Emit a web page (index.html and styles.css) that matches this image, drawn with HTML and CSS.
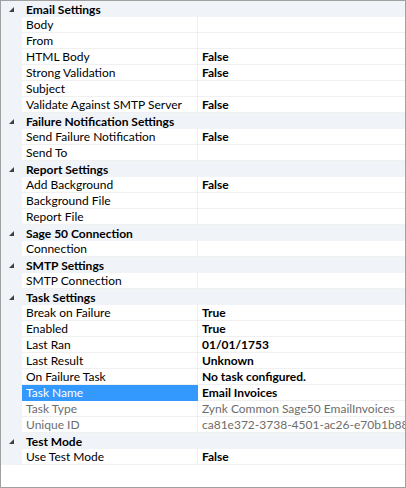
FILE: index.html
```html
<!DOCTYPE html>
<html>
<head>
<meta charset="utf-8">
<link rel="stylesheet" href="styles.css">
</head>
<body>
<div class="grid">
  <div class="cat"><span class="tog"><svg width="5" height="5" viewBox="0 0 5 5"><polygon points="5,0 5,5 0,5"/></svg></span><span class="cat-label">Email Settings</span></div>
  <div class="prop"><span class="gut"></span><span class="name">Body</span><span class="val"></span></div>
  <div class="prop"><span class="gut"></span><span class="name">From</span><span class="val"></span></div>
  <div class="prop"><span class="gut"></span><span class="name">HTML Body</span><span class="val">False</span></div>
  <div class="prop"><span class="gut"></span><span class="name">Strong Validation</span><span class="val">False</span></div>
  <div class="prop"><span class="gut"></span><span class="name">Subject</span><span class="val"></span></div>
  <div class="prop"><span class="gut"></span><span class="name">Validate Against SMTP Server</span><span class="val">False</span></div>

  <div class="cat"><span class="tog"><svg width="5" height="5" viewBox="0 0 5 5"><polygon points="5,0 5,5 0,5"/></svg></span><span class="cat-label">Failure Notification Settings</span></div>
  <div class="prop"><span class="gut"></span><span class="name">Send Failure Notification</span><span class="val">False</span></div>
  <div class="prop"><span class="gut"></span><span class="name">Send To</span><span class="val"></span></div>

  <div class="cat"><span class="tog"><svg width="5" height="5" viewBox="0 0 5 5"><polygon points="5,0 5,5 0,5"/></svg></span><span class="cat-label">Report Settings</span></div>
  <div class="prop"><span class="gut"></span><span class="name">Add Background</span><span class="val">False</span></div>
  <div class="prop"><span class="gut"></span><span class="name">Background File</span><span class="val"></span></div>
  <div class="prop"><span class="gut"></span><span class="name">Report File</span><span class="val"></span></div>

  <div class="cat"><span class="tog"><svg width="5" height="5" viewBox="0 0 5 5"><polygon points="5,0 5,5 0,5"/></svg></span><span class="cat-label">Sage 50 Connection</span></div>
  <div class="prop"><span class="gut"></span><span class="name">Connection</span><span class="val"></span></div>

  <div class="cat"><span class="tog"><svg width="5" height="5" viewBox="0 0 5 5"><polygon points="5,0 5,5 0,5"/></svg></span><span class="cat-label">SMTP Settings</span></div>
  <div class="prop"><span class="gut"></span><span class="name">SMTP Connection</span><span class="val"></span></div>

  <div class="cat"><span class="tog"><svg width="5" height="5" viewBox="0 0 5 5"><polygon points="5,0 5,5 0,5"/></svg></span><span class="cat-label">Task Settings</span></div>
  <div class="prop"><span class="gut"></span><span class="name">Break on Failure</span><span class="val">True</span></div>
  <div class="prop"><span class="gut"></span><span class="name">Enabled</span><span class="val">True</span></div>
  <div class="prop"><span class="gut"></span><span class="name">Last Ran</span><span class="val">01/01/1753</span></div>
  <div class="prop"><span class="gut"></span><span class="name">Last Result</span><span class="val">Unknown</span></div>
  <div class="prop"><span class="gut"></span><span class="name">On Failure Task</span><span class="val">No task configured.</span></div>
  <div class="prop selected"><span class="gut"></span><span class="name">Task Name</span><span class="val">Email Invoices</span></div>
  <div class="prop readonly"><span class="gut"></span><span class="name">Task Type</span><span class="val">Zynk Common Sage50 EmailInvoices</span></div>
  <div class="prop readonly"><span class="gut"></span><span class="name">Unique ID</span><span class="val">ca81e372-3738-4501-ac26-e70b1b88ab7e</span></div>

  <div class="cat"><span class="tog"><svg width="5" height="5" viewBox="0 0 5 5"><polygon points="5,0 5,5 0,5"/></svg></span><span class="cat-label">Test Mode</span></div>
  <div class="prop"><span class="gut"></span><span class="name">Use Test Mode</span><span class="val">False</span></div>
</div>
</body>
</html>
```
FILE: styles.css
```css
html, body {
  margin: 0;
  padding: 0;
  background: #ffffff;
}
.grid {
  box-sizing: border-box;
  width: 406px;
  height: 488px;
  border: 1px solid #a0a0a0;
  background: #ffffff;
  font-family: Lato, "Liberation Sans", Arial, sans-serif;
  font-size: 12px;
  color: #000000;
  overflow: hidden;
}
.cat {
  display: flex;
  height: 16px;
  background: #f0f4f9;
  align-items: center;
}
.tog {
  width: 25px;
  flex: none;
  display: flex;
  justify-content: flex-start;
  padding-left: 8px;
  padding-top: 1px;
  box-sizing: border-box;
  align-items: center;
}
.tog svg {
  fill: #404040;
  display: block;
}
.cat-label {
  font-weight: bold;
  line-height: 16px;
  padding-top: 1px;
  white-space: nowrap;
}
.prop {
  display: flex;
  height: 16px;
}
.gut {
  width: 21px;
  flex: none;
  background: #f0f4f9;
}
.name {
  width: 176px;
  flex: none;
  box-sizing: border-box;
  padding-left: 4px;
  padding-top: 1px;
  line-height: 14px;
  border-bottom: 1px solid #f0f0f0;
  border-right: 1px solid #f0f0f0;
  white-space: nowrap;
  overflow: hidden;
}
.val {
  flex: 1;
  min-width: 0;
  box-sizing: border-box;
  padding-left: 4px;
  padding-top: 1px;
  line-height: 14px;
  border-bottom: 1px solid #f0f0f0;
  font-weight: bold;
  white-space: nowrap;
  overflow: hidden;
}
.selected .name {
  background: #3399ff;
  color: #ffffff;
  border-bottom-color: #3399ff;
  border-right-color: #3399ff;
}
.readonly .name,
.readonly .val {
  color: #6d6d6d;
  font-weight: normal;
}
```
